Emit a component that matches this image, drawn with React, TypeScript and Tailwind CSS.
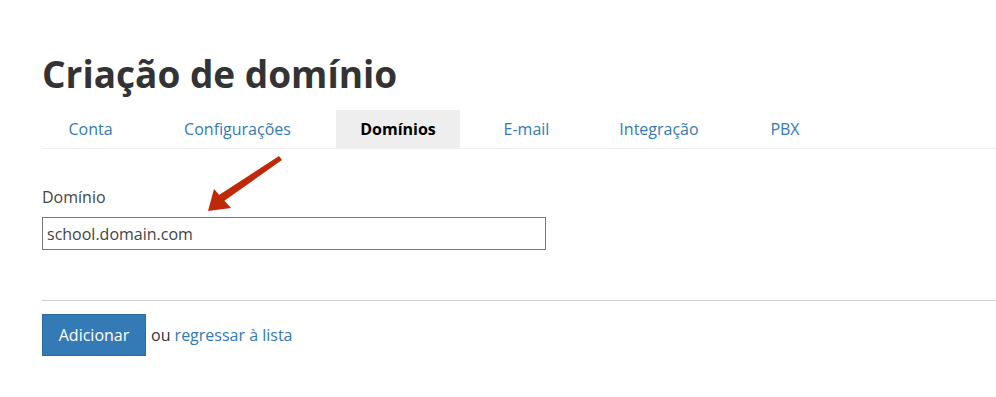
import React from 'react'

const tabs = [
  { label: 'Conta', w: 'w-[97px]' },
  { label: 'Configurações', w: 'w-[161px]' },
  { label: 'Domínios', w: 'w-[124px]', active: true },
  { label: 'E-mail', w: 'w-[97px]' },
  { label: 'Integração', w: 'w-[132px]' },
  { label: 'PBX', w: 'w-[84px]' },
]

export default function App() {
  return (
    <div className="relative min-h-[397px] bg-white pl-[42px] pt-[54px] font-['Open_Sans',sans-serif] text-[#333]">
      {/* Title */}
      <h1 className="h-[40px] text-[37px] font-bold leading-[40px] text-[#333]">Criação de domínio</h1>

      {/* Tabs */}
      <div className="mt-[16px] flex gap-[18px] border-b border-[#eee]">
        {tabs.map((t) => (
          <div
            key={t.label}
            className={`${t.w} h-[38px] text-center text-[16px] leading-[38px] ${
              t.active ? 'bg-[#eee] font-bold text-black' : 'text-[#337ab7]'
            }`}
          >
            {t.label}
          </div>
        ))}
      </div>

      {/* Domain field */}
      <div className="mt-[38px]">
        <label className="block text-[16px] leading-[20px] text-[#444]">Domínio</label>
        <input
          type="text"
          readOnly
          value="school.domain.com"
          className="mt-[10px] block h-[33px] w-[504px] border border-[#767676] px-[4px] text-[16px] text-[#444] outline-none"
        />
      </div>

      <div className="mt-[50px] h-px bg-[#d0d0d0]" />

      {/* Actions */}
      <div className="mt-[13px] flex items-center gap-[5px] text-[16px]">
        <button className="h-[42px] w-[104px] border border-[#2e6da4] bg-[#337ab7] text-[16px] text-white">
          Adicionar
        </button>
        <span className="text-[#333]">
          ou <a className="text-[#337ab7]">regressar à lista</a>
        </span>
      </div>

      {/* Annotation arrow */}
      <svg className="pointer-events-none absolute left-0 top-0" width="996" height="397">
        <polygon points="279,156 282,160 224,201 219,195" fill="#c0280a" />
        <polygon points="208,211 214,189 231,208" fill="#c0280a" />
      </svg>
    </div>
  )
}
